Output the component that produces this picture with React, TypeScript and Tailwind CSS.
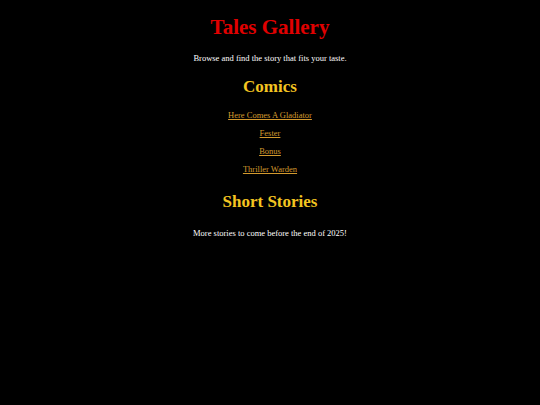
export default function App() {
  const links = ["Here Comes A Gladiator", "Fester", "Bonus", "Thriller Warden"];
  return (
    <div className="min-h-[405px] w-full bg-black text-white text-center flex flex-col items-center" style={{ fontFamily: '"Liberation Serif", "Times New Roman", serif' }}>
      <h1 className="mt-[14px] text-[21px] font-bold text-[#e00000] leading-[26px]">Tales Gallery</h1>
      <p className="mt-[13px] text-[8.5px] leading-[10px]">Browse and find the story that fits your taste.</p>
      <h2 className="mt-[13px] text-[17px] font-bold text-[#f4c521] leading-[22px]">Comics</h2>
      <div className="mt-[12px] flex flex-col items-center gap-[8px]">
        {links.map((l) => (
          <a key={l} href="#" className="text-[8.5px] leading-[10px] underline text-[#d39a2e]">{l}</a>
        ))}
      </div>
      <h2 className="mt-[17px] text-[17px] font-bold text-[#f4c521] leading-[22px]">Short Stories</h2>
      <p className="mt-[15px] text-[8.5px] leading-[10px]">More stories to come before the end of 2025!</p>
    </div>
  );
}
